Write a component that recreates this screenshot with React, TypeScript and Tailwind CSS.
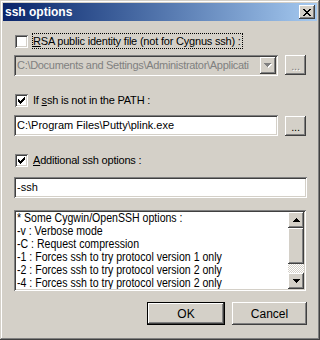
import React from "react";

const sunken =
  "shadow-[inset_1px_1px_0_#808080,inset_-1px_-1px_0_#ffffff,inset_2px_2px_0_#404040,inset_-2px_-2px_0_#d4d0c8]";
const raised =
  "shadow-[inset_-1px_-1px_0_#404040,inset_1px_1px_0_#ffffff,inset_-2px_-2px_0_#808080,inset_2px_2px_0_#d4d0c8]";

function Check({ checked }: { checked: boolean }) {
  return (
    <div className={`w-[13px] h-[13px] bg-white shrink-0 relative ${sunken}`}>
      {checked && (
        <svg width="13" height="13" className="absolute left-0 top-0" shapeRendering="crispEdges">
          {[0, 1, 2, 3, 4, 5, 6].map((c) => {
            const top = [2, 3, 4, 3, 2, 1, 0][c];
            return <rect key={c} x={3 + c} y={3 + top} width={1} height={3} fill="#000" />;
          })}
        </svg>
      )}
    </div>
  );
}

function Tri({ up, color }: { up?: boolean; color: string }) {
  const rows = up ? [1, 3, 5, 7] : [7, 5, 3, 1];
  return (
    <svg width="7" height="4" shapeRendering="crispEdges">
      {rows.map((w, i) => (
        <rect key={i} x={(7 - w) / 2} y={i} width={w} height={1} fill={color} />
      ))}
    </svg>
  );
}

function DisabledTri() {
  return (
    <div className="relative w-[8px] h-[5px]">
      <div className="absolute left-[1px] top-[1px]">
        <Tri color="#ffffff" />
      </div>
      <div className="absolute left-0 top-0">
        <Tri color="#808080" />
      </div>
    </div>
  );
}

function DotsButton({ disabled }: { disabled?: boolean }) {
  return (
    <div
      className={`w-[21px] h-[20px] bg-[#d4d0c8] ${raised} flex items-center justify-center text-[11px] leading-none`}
    >
      {disabled ? (
        <span className="relative text-[#808080] [text-shadow:1px_1px_0_#ffffff] pt-[3px]">...</span>
      ) : (
        <span className="pt-[3px]">...</span>
      )}
    </div>
  );
}

export default function App() {
  const lines = [
    "* Some Cygwin/OpenSSH options :",
    "-v : Verbose mode",
    "-C : Request compression",
    "-1 : Forces ssh to try protocol version 1 only",
    "-2 : Forces ssh to try protocol version 2 only",
    "-4 : Forces ssh to try protocol version 2 only",
  ];
  return (
    <div
      className="w-[320px] h-[340px] bg-[#d4d0c8] overflow-hidden text-black"
      style={{ fontFamily: '"Liberation Sans", Arial, sans-serif' }}
    >
      <div
        className={`w-full h-full p-[3px] flex flex-col shadow-[inset_-1px_-1px_0_#404040,inset_1px_1px_0_#d4d0c8,inset_-2px_-2px_0_#808080,inset_2px_2px_0_#ffffff]`}
      >
        {/* Title bar */}
        <div className="h-[18px] bg-linear-to-r from-[#0a246a] to-[#a6caf0] flex items-center pl-[2px] pr-[2px] shrink-0">
          <span className="text-white font-bold text-[12px] leading-none">ssh options</span>
          <div className="flex-1" />
          <div className={`w-[16px] h-[14px] bg-[#d4d0c8] ${raised} flex items-center justify-center`}>
            <svg width="8" height="7" shapeRendering="crispEdges">
              {[0, 1, 2, 3, 4, 5, 6].map((i) => (
                <React.Fragment key={i}>
                  <rect x={i} y={i} width={2} height={1} fill="#000" />
                  <rect x={6 - i} y={i} width={2} height={1} fill="#000" />
                </React.Fragment>
              ))}
            </svg>
          </div>
        </div>

        {/* Content */}
        <div className="flex flex-col pl-[11px] pr-[10px] text-[11px] tracking-[-0.2px]">
          {/* Row 1 */}
          <div className="mt-[12px] h-[16px] flex items-center">
            <div className="ml-[1px]">
              <Check checked={false} />
            </div>
            <div className="ml-[4px] border border-dotted border-black h-[16px] pr-[1px] flex items-center leading-none">
              <span>
                <span className="underline">R</span>SA public identity file (not for Cygnus ssh) :
              </span>
            </div>
          </div>

          <div className="mt-[6px] flex items-start gap-[7px]">
            <div className={`w-[264px] h-[21px] bg-[#d4d0c8] ${sunken} flex items-center pl-[3px] pr-[2px]`}>
              <div className="flex-1 min-w-0 overflow-hidden">
                <span className="block whitespace-nowrap text-[#808080] leading-none tracking-[-0.3px]">
                  C:\Documents and Settings\Administrator\Applicati
                </span>
              </div>
              <div className={`w-[16px] h-[17px] bg-[#d4d0c8] ${raised} flex items-center justify-center shrink-0`}>
                <DisabledTri />
              </div>
            </div>
            <DotsButton disabled />
          </div>

          {/* Row 2 */}
          <div className="mt-[16px] h-[16px] flex items-center">
            <div className="ml-[1px]">
              <Check checked />
            </div>
            <span className="ml-[5px] leading-none">
              If <span className="underline">s</span>sh is not in the PATH :
            </span>
          </div>

          <div className="mt-[7px] flex items-start gap-[7px]">
            <div className={`w-[264px] h-[21px] bg-white ${sunken} flex items-center pl-[3px]`}>
              <span className="leading-none whitespace-nowrap tracking-normal">C:\Program Files\Putty\plink.exe</span>
            </div>
            <div className="mt-[1px]">
              <DotsButton />
            </div>
          </div>

          {/* Row 3 */}
          <div className="mt-[16px] h-[16px] flex items-center">
            <div className="ml-[1px]">
              <Check checked />
            </div>
            <span className="ml-[5px] leading-none">
              <span className="underline">A</span>dditional ssh options :
            </span>
          </div>

          <div className={`mt-[9px] w-[293px] h-[21px] bg-white ${sunken} flex items-center pl-[3px]`}>
            <span className="leading-none tracking-normal">-ssh</span>
          </div>

          {/* List */}
          <div className={`mt-[12px] w-[292px] h-[81px] bg-white ${sunken} p-[2px] flex`}>
            <div className="flex-1 overflow-hidden pl-[1px] tracking-normal">
              <div className="origin-top-left scale-x-[0.88]">
                {lines.map((l, i) => (
                  <div key={i} className="h-[13px] leading-[13px] whitespace-nowrap text-[12px]">
                    {l}
                  </div>
                ))}
              </div>
            </div>
            <div className="w-[16px] flex flex-col shrink-0">
              <div className={`h-[16px] bg-[#d4d0c8] ${raised} flex items-center justify-center`}>
                <Tri up color="#000" />
              </div>
              <div className={`h-[36px] bg-[#d4d0c8] ${raised}`} />
              <div className="flex-1 bg-[repeating-conic-gradient(#d4d0c8_0%_25%,#ffffff_0%_50%)] bg-size-[2px_2px]" />
              <div className={`h-[16px] bg-[#d4d0c8] ${raised} flex items-center justify-center`}>
                <Tri color="#000" />
              </div>
            </div>
          </div>

          {/* Buttons */}
          <div className="mt-[11px] flex justify-end gap-[7px] tracking-normal">
            <div
              className={`w-[78px] h-[23px] bg-[#d4d0c8] border border-black ${raised} flex items-center justify-center text-[12px] leading-none`}
            >
              OK
            </div>
            <div
              className={`w-[75px] h-[23px] bg-[#d4d0c8] ${raised} flex items-center justify-center text-[12px] leading-none`}
            >
              Cancel
            </div>
          </div>
        </div>
      </div>
    </div>
  );
}
